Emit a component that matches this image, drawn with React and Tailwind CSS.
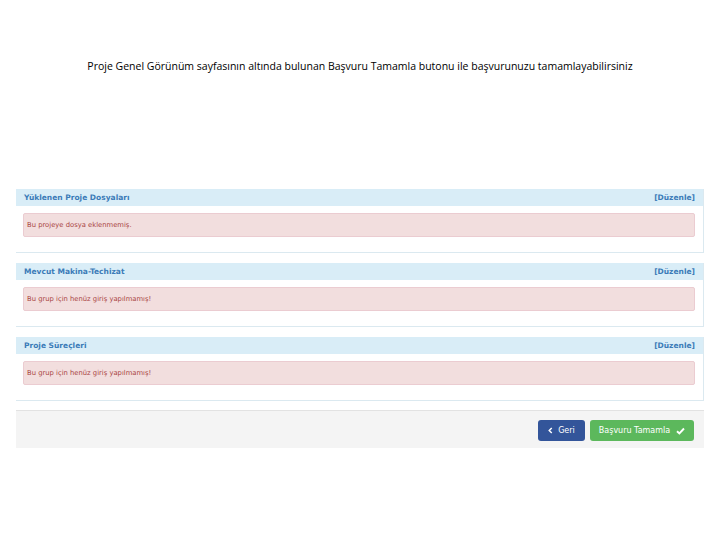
import React from "react";

const sections = [
  { id: 1, title: "Yüklenen Proje Dosyaları", message: "Bu projeye dosya eklenmemiş." },
  { id: 2, title: "Mevcut Makina-Techizat", message: "Bu grup için henüz giriş yapılmamış!" },
  { id: 3, title: "Proje Süreçleri", message: "Bu grup için henüz giriş yapılmamış!" },
];

const SectionPanel = ({ section }) => {
  return (
    <div className="mb-[10px] h-[64px] border-r border-b border-[#dbe9f0] bg-white">
      <div className="flex h-[17px] items-center justify-between bg-[#d9edf7] pl-[8px] pr-[8px] text-[7.5px] font-bold text-[#3b7bb8]">
        <span>{section.title}</span>
        <span>[Düzenle]</span>
      </div>
      <div className="ml-[7px] mr-[8px] mt-[7px] flex h-[24px] items-center rounded-[2px] border border-[#ebccd1] bg-[#f2dede] pl-[3px] text-[6.8px] text-[#a94442]">
        {section.message}
      </div>
    </div>
  );
};

export default function App() {
  return (
    <div
      className="h-[540px] w-[720px] bg-white"
      style={{ fontFamily: '"DejaVu Sans", Verdana, sans-serif' }}
    >
      <p
        className="pt-[59px] text-center text-[10.5px] text-black"
        style={{ fontFamily: '"Open Sans", sans-serif' }}
      >
        Proje Genel Görünüm sayfasının altında bulunan Başvuru Tamamla butonu ile başvurunuzu tamamlayabilirsiniz
      </p>

      <div className="mx-[16px] mt-[114px]">
        {sections.map((section) => (
          <SectionPanel key={section.id} section={section} />
        ))}

        <div className="mt-[-1px] flex h-[38px] items-center justify-end gap-[5px] border-t border-[#e2e2e2] bg-[#f4f4f4] pr-[10px] pt-[3px]">
          <button className="flex h-[21px] w-[47px] items-center justify-center gap-[5px] rounded-[3px] bg-[#33559a] text-[8px] text-white">
            <svg className="h-[7px] w-[5px]" viewBox="0 0 6 8" fill="none">
              <path d="M4.5 1 L1.5 4 L4.5 7" stroke="white" strokeWidth="1.8" />
            </svg>
            Geri
          </button>
          <button className="flex h-[21px] w-[104px] items-center justify-center gap-[6px] rounded-[3px] bg-[#5cb85c] text-[8px] text-white">
            Başvuru Tamamla
            <svg className="h-[8px] w-[9px]" viewBox="0 0 9 8" fill="none">
              <path d="M1 4.2 L3.4 6.5 L8 1.5" stroke="white" strokeWidth="1.9" />
            </svg>
          </button>
        </div>
      </div>
    </div>
  );
}
